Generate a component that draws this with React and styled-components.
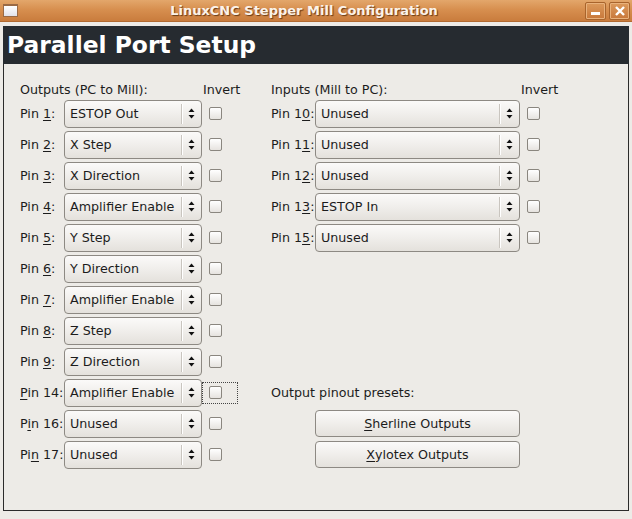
import React from 'react';
import styled, { createGlobalStyle } from 'styled-components';

const GlobalStyle = createGlobalStyle`
  html, body {
    margin: 0;
    padding: 0;
    background: #edebe7;
  }
  body {
    font-family: "DejaVu Sans", "Liberation Sans", sans-serif;
    font-size: 12.7px;
    color: #1c1c1c;
  }
`;

const Window = styled.div`
  width: 632px;
  height: 519px;
  display: flex;
  flex-direction: column;
  background: #edebe7;
  overflow: hidden;
`;

const TitleBar = styled.div`
  height: 21px;
  flex: none;
  display: flex;
  align-items: center;
  padding: 0 2px 0 3px;
  background: linear-gradient(to bottom, #e3a76b 0%, #d78f4f 45%, #c97c3d 100%);
  border-bottom: 1px solid #b26a30;
`;

const WinIcon = styled.div`
  width: 13px;
  height: 10px;
  border: 1px solid #9a6a45;
  background: linear-gradient(to bottom, #ffffff, #e2e2ea);
  border-top-width: 2px;
`;

const TitleText = styled.div`
  flex: 1;
  text-align: center;
  font-weight: bold;
  font-size: 13px;
  color: #fbf3ea;
  text-shadow: 1px 1px 1px #6a3b16;
  padding-left: 8px;
`;

const WinButton = styled.div`
  width: 19px;
  height: 16px;
  margin-left: 3px;
  border: 1px solid #a8642c;
  border-radius: 2px;
  box-shadow: inset 0 0 0 1px #e9b27c;
  background: linear-gradient(to bottom, #dc9a5c, #c8783a);
  display: flex;
  align-items: center;
  justify-content: center;
`;

const Content = styled.div`
  flex: 1;
  display: flex;
  flex-direction: column;
  padding: 4px 3px 8px 3px;
`;

const Header = styled.div`
  height: 38px;
  flex: none;
  background: #262b30;
  color: #ffffff;
  font-weight: bold;
  font-size: 23.4px;
  display: flex;
  align-items: center;
  padding-left: 4px;
`;

const Panel = styled.div`
  flex: 1;
  border: 1px solid #2b2b2b;
  border-top: none;
  display: flex;
  padding: 17px 0 0 16px;
  gap: 33px;
`;

const Column = styled.div`
  display: grid;
  grid-template-columns: 44px ${p => p.$combo}px 36px;
  grid-template-rows: 17px repeat(12, 31px);
  align-items: center;
`;

const SectionTitle = styled.div`
  grid-column: 1 / 3;
  white-space: nowrap;
`;

const InvertTitle = styled.div`
  padding-left: 1px;
`;

const PinLabel = styled.div`
  white-space: nowrap;
`;

const Combo = styled.div`
  height: 28px;
  box-sizing: border-box;
  border: 1px solid #8d8983;
  border-radius: 4px;
  background: linear-gradient(to bottom, #fbfaf9 0%, #f0eeeb 50%, #e4e1dc 100%);
  display: flex;
  align-items: center;
  padding-left: 5px;
`;

const ComboText = styled.span`
  flex: 1;
  white-space: nowrap;
`;

const ComboSep = styled.div`
  width: 1px;
  height: 20px;
  background: #c9c5bf;
  box-shadow: 1px 0 0 #ffffff;
`;

const ComboArrows = styled.div`
  width: 19px;
  display: flex;
  align-items: center;
  justify-content: center;
`;

const CheckCell = styled.div`
  height: 22px;
  width: 36px;
  display: flex;
  align-items: center;
  padding-left: 7px;
  box-sizing: border-box;
  outline: ${p => (p.$focus ? '1px dotted #444' : 'none')};
  outline-offset: -1px;
`;

const CheckBox = styled.div`
  width: 13px;
  height: 13px;
  box-sizing: border-box;
  border: 1px solid #8a867f;
  border-radius: 2px;
  background: linear-gradient(to bottom, #ffffff, #e6e3df);
`;

const PresetLabel = styled.div`
  grid-column: 1 / 4;
  grid-row: 11;
`;

const PresetButton = styled.div`
  grid-column: 2;
  grid-row: ${p => p.$row};
  height: 27px;
  box-sizing: border-box;
  border: 1px solid #8d8983;
  border-radius: 4px;
  background: linear-gradient(to bottom, #fbfaf9 0%, #f0eeeb 50%, #e4e1dc 100%);
  display: flex;
  align-items: center;
  justify-content: center;
`;

const U = styled.span`
  text-decoration: underline;
  text-underline-offset: 2px;
`;

const Arrows = () => (
  <svg width="7" height="11" viewBox="0 0 7 11">
    <path d="M3.5 0.5 L6.5 4 L0.5 4 Z" fill="#111" />
    <path d="M0.5 7 L6.5 7 L3.5 10.5 Z" fill="#111" />
  </svg>
);

// label split into [before, underlined, after]
const outputs = [
  [['Pin ', '1', ':'], 'ESTOP Out'],
  [['Pin ', '2', ':'], 'X Step'],
  [['Pin ', '3', ':'], 'X Direction'],
  [['Pin ', '4', ':'], 'Amplifier Enable'],
  [['Pin ', '5', ':'], 'Y Step'],
  [['Pin ', '6', ':'], 'Y Direction'],
  [['Pin ', '7', ':'], 'Amplifier Enable'],
  [['Pin ', '8', ':'], 'Z Step'],
  [['Pin ', '9', ':'], 'Z Direction'],
  [['', 'P', 'in 14:'], 'Amplifier Enable', true],
  [['P', 'i', 'n 16:'], 'Unused'],
  [['Pi', 'n', ' 17:'], 'Unused'],
];

const inputs = [
  [['Pin 1', '0', ':'], 'Unused'],
  [['Pin 1', '1', ':'], 'Unused'],
  [['Pin 1', '2', ':'], 'Unused'],
  [['Pin 1', '3', ':'], 'ESTOP In'],
  [['Pin 1', '5', ':'], 'Unused'],
];

const PinRow = ({ label, value, focus }) => (
  <>
    <PinLabel>
      {label[0]}
      <U>{label[1]}</U>
      {label[2]}
    </PinLabel>
    <Combo>
      <ComboText>{value}</ComboText>
      <ComboSep />
      <ComboArrows>
        <Arrows />
      </ComboArrows>
    </Combo>
    <CheckCell $focus={focus}>
      <CheckBox />
    </CheckCell>
  </>
);

export default function App() {
  return (
    <Window>
      <GlobalStyle />
      <TitleBar>
        <WinIcon />
        <TitleText>LinuxCNC Stepper Mill Configuration</TitleText>
        <WinButton>
          <svg width="9" height="9" viewBox="0 0 9 9">
            <rect x="0" y="6" width="9" height="3" fill="#fff" />
          </svg>
        </WinButton>
        <WinButton>
          <svg width="10" height="10" viewBox="0 0 10 10">
            <path d="M1 1 L9 9 M9 1 L1 9" stroke="#fff" strokeWidth="2.4" />
          </svg>
        </WinButton>
      </TitleBar>
      <Content>
        <Header>Parallel Port Setup</Header>
        <Panel>
          <Column $combo={138}>
            <SectionTitle>Outputs (PC to Mill):</SectionTitle>
            <InvertTitle>Invert</InvertTitle>
            {outputs.map(([label, value, focus], i) => (
              <PinRow key={i} label={label} value={value} focus={focus} />
            ))}
          </Column>
          <Column $combo={205}>
            <SectionTitle>Inputs (Mill to PC):</SectionTitle>
            <InvertTitle>Invert</InvertTitle>
            {inputs.map(([label, value], i) => (
              <PinRow key={i} label={label} value={value} />
            ))}
            <PresetLabel>Output pinout presets:</PresetLabel>
            <PresetButton $row={12}>
              <span>
                <U>S</U>herline Outputs
              </span>
            </PresetButton>
            <PresetButton $row={13}>
              <span>
                <U>X</U>ylotex Outputs
              </span>
            </PresetButton>
          </Column>
        </Panel>
      </Content>
    </Window>
  );
}
